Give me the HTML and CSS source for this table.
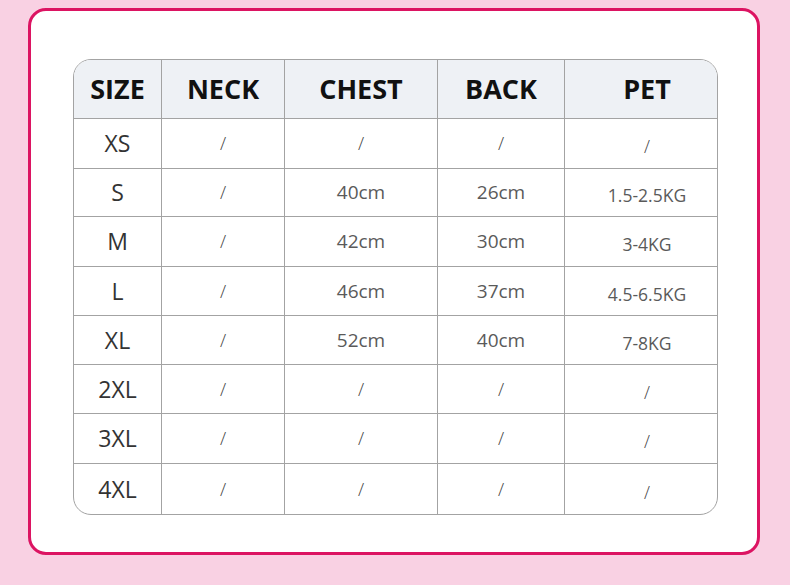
FILE: index.html
```html
<!DOCTYPE html>
<html>
<head>
<meta charset="utf-8">
<link rel="stylesheet" href="styles.css">
</head>
<body>
<div class="card">
  <div class="table-wrap">
    <table class="size-table">
      <thead>
        <tr class="head"><th class="c1">SIZE</th><th class="c2">NECK</th><th class="c3">CHEST</th><th class="c4">BACK</th><th class="c5">PET</th></tr>
      </thead>
      <tbody>
        <tr class="r1"><td class="sz">XS</td><td class="sl">/</td><td class="sl">/</td><td class="sl">/</td><td class="pet sl">/</td></tr>
        <tr class="r2"><td class="sz">S</td><td class="sl">/</td><td>40cm</td><td>26cm</td><td class="pet">1.5-2.5KG</td></tr>
        <tr class="r3"><td class="sz">M</td><td class="sl">/</td><td>42cm</td><td>30cm</td><td class="pet">3-4KG</td></tr>
        <tr class="r4"><td class="sz">L</td><td class="sl">/</td><td>46cm</td><td>37cm</td><td class="pet">4.5-6.5KG</td></tr>
        <tr class="r5"><td class="sz">XL</td><td class="sl">/</td><td>52cm</td><td>40cm</td><td class="pet">7-8KG</td></tr>
        <tr class="r6"><td class="sz">2XL</td><td class="sl">/</td><td class="sl">/</td><td class="sl">/</td><td class="pet sl">/</td></tr>
        <tr class="r7"><td class="sz">3XL</td><td class="sl">/</td><td class="sl">/</td><td class="sl">/</td><td class="pet sl">/</td></tr>
        <tr class="r8"><td class="sz">4XL</td><td class="sl">/</td><td class="sl">/</td><td class="sl">/</td><td class="pet sl">/</td></tr>
      </tbody>
    </table>
  </div>
</div>
</body>
</html>
```
FILE: styles.css
```css
html, body {
  margin: 0;
  padding: 0;
  background: #f9d1e3;
  font-family: "Open Sans", "Noto Sans", sans-serif;
}
body {
  width: 790px;
  height: 585px;
  padding-top: 8px;
  padding-left: 28px;
  box-sizing: border-box;
}
.card {
  width: 732px;
  height: 547px;
  box-sizing: border-box;
  border: 3px solid #dc1462;
  border-radius: 18px;
  background: #fff;
  padding: 48px 0 0 42px;
}
.table-wrap {
  width: 645px;
  height: 456px;
  box-sizing: border-box;
  border: 1px solid #a3a3a3;
  border-radius: 18px;
  overflow: hidden;
}
.size-table {
  width: 100%;
  height: 100%;
  border-collapse: collapse;
  table-layout: fixed;
}
.size-table th, .size-table td {
  border-left: 1px solid #a3a3a3;
  border-top: 1px solid #a3a3a3;
  text-align: center;
  padding: 0;
}
.size-table th:first-child, .size-table td:first-child { border-left: none; }
.head th { border-top: none; }
.head {
  background: #eef1f5;
  height: 58px;
}
.size-table th {
  font-size: 27px;
  font-weight: 700;
  color: #111;
  padding-top: 0;
}
.size-table th.c5 { padding-left: 12px; }
.c1 { width: 87px; }
.c2 { width: 122px; }
.c3 { width: 152px; }
.c4 { width: 126px; }
.size-table td {
  font-size: 19px;
  color: #5a5a5a;
}
.size-table td.sz {
  font-size: 23px;
  color: #333;
}
.size-table td.sl {
  font-weight: 300;
  color: #444;
  font-size: 18px;
}
.size-table td.pet {
  font-size: 17.5px;
  padding-top: 6px;
  padding-left: 12px;
}
.r1 { height: 50px; }
.r2 { height: 48px; }
.r3 { height: 50px; }
.r4 { height: 49px; }
.r5 { height: 49px; }
.r6 { height: 49px; }
.r7 { height: 50px; }
.r8 { height: 51px; }
```
